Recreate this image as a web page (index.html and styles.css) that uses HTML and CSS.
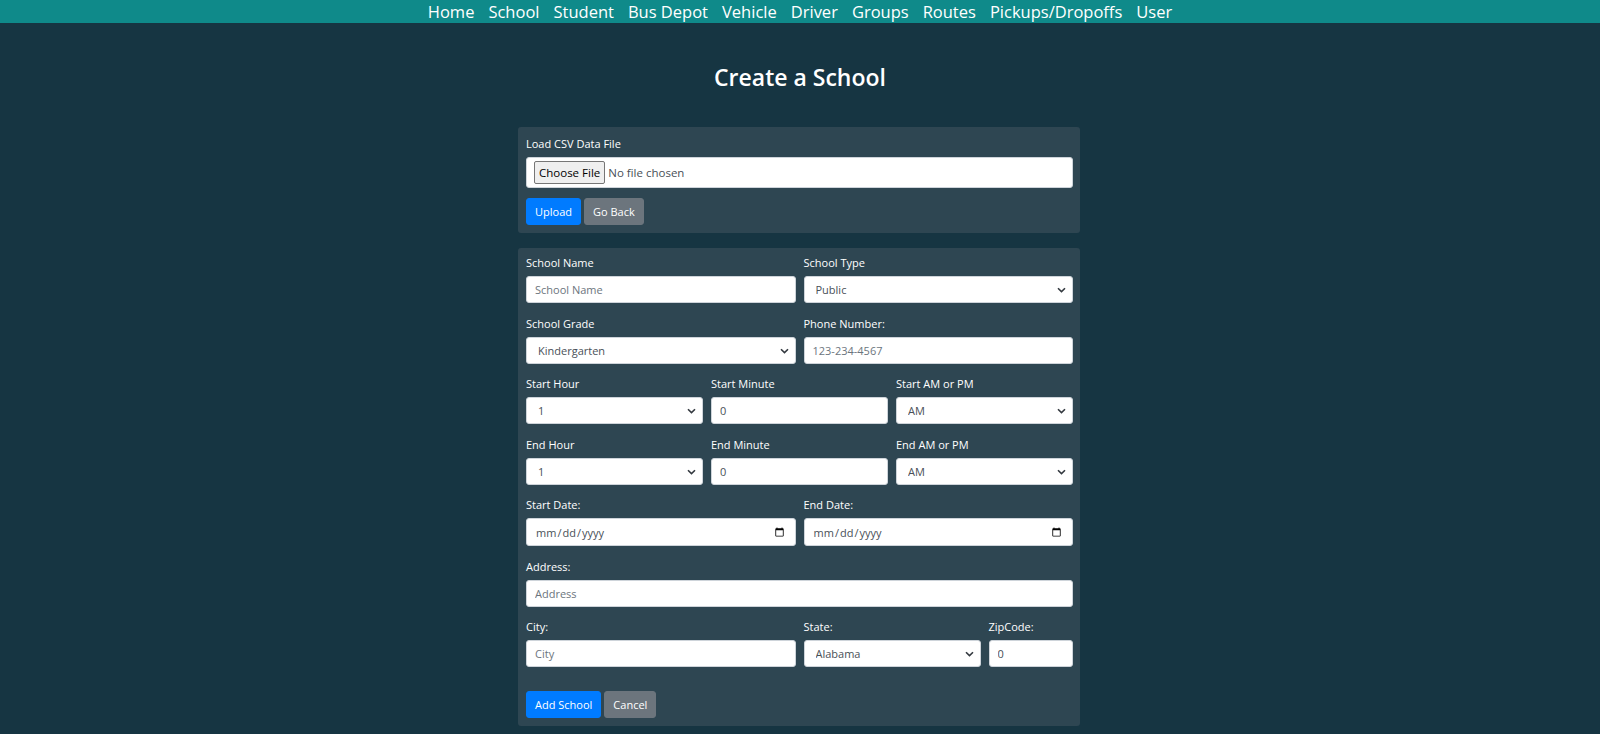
FILE: index.html
```html
<!DOCTYPE html>
<html lang="en">
<head>
<meta charset="utf-8">
<title>Create a School</title>
<link rel="stylesheet" href="styles.css">
</head>
<body>
<nav class="topnav">
  <a href="#">Home</a>
  <a href="#">School</a>
  <a href="#">Student</a>
  <a href="#">Bus Depot</a>
  <a href="#">Vehicle</a>
  <a href="#">Driver</a>
  <a href="#">Groups</a>
  <a href="#">Routes</a>
  <a href="#">Pickups/Dropoffs</a>
  <a href="#">User</a>
</nav>

<h1 class="page-title">Create a School</h1>

<main class="wrap">
  <section class="card upload-card">
    <label class="lbl" for="csv">Load CSV Data File</label>
    <div class="file-box"><input id="csv" class="file-input" type="file"></div>
    <div class="btn-row upload-row">
      <button class="btn btn-primary" type="button">Upload</button>
      <button class="btn btn-secondary" type="button">Go Back</button>
    </div>
  </section>

  <form class="card form-card">
    <div class="grid">
      <div class="field span6">
        <label class="lbl">School Name</label>
        <input class="ctl" type="text" placeholder="School Name">
      </div>
      <div class="field span6">
        <label class="lbl">School Type</label>
        <div class="sel-wrap">
          <select class="ctl sel"><option>Public</option><option>Private</option></select>
          <svg class="chev" width="9" height="6" viewBox="0 0 9 6"><path d="M1 1.2 L4.5 4.6 L8 1.2" fill="none" stroke="#343a40" stroke-width="1.6"/></svg>
        </div>
      </div>

      <div class="field span6">
        <label class="lbl">School Grade</label>
        <div class="sel-wrap">
          <select class="ctl sel"><option>Kindergarten</option></select>
          <svg class="chev" width="9" height="6" viewBox="0 0 9 6"><path d="M1 1.2 L4.5 4.6 L8 1.2" fill="none" stroke="#343a40" stroke-width="1.6"/></svg>
        </div>
      </div>
      <div class="field span6">
        <label class="lbl">Phone Number:</label>
        <input class="ctl" type="text" placeholder="123-234-4567">
      </div>

      <div class="field span4">
        <label class="lbl">Start Hour</label>
        <div class="sel-wrap">
          <select class="ctl sel"><option>1</option></select>
          <svg class="chev" width="9" height="6" viewBox="0 0 9 6"><path d="M1 1.2 L4.5 4.6 L8 1.2" fill="none" stroke="#343a40" stroke-width="1.6"/></svg>
        </div>
      </div>
      <div class="field span4">
        <label class="lbl">Start Minute</label>
        <input class="ctl" type="text" value="0">
      </div>
      <div class="field span4">
        <label class="lbl">Start AM or PM</label>
        <div class="sel-wrap">
          <select class="ctl sel"><option>AM</option><option>PM</option></select>
          <svg class="chev" width="9" height="6" viewBox="0 0 9 6"><path d="M1 1.2 L4.5 4.6 L8 1.2" fill="none" stroke="#343a40" stroke-width="1.6"/></svg>
        </div>
      </div>

      <div class="field span4">
        <label class="lbl">End Hour</label>
        <div class="sel-wrap">
          <select class="ctl sel"><option>1</option></select>
          <svg class="chev" width="9" height="6" viewBox="0 0 9 6"><path d="M1 1.2 L4.5 4.6 L8 1.2" fill="none" stroke="#343a40" stroke-width="1.6"/></svg>
        </div>
      </div>
      <div class="field span4">
        <label class="lbl">End Minute</label>
        <input class="ctl" type="text" value="0">
      </div>
      <div class="field span4">
        <label class="lbl">End AM or PM</label>
        <div class="sel-wrap">
          <select class="ctl sel"><option>AM</option><option>PM</option></select>
          <svg class="chev" width="9" height="6" viewBox="0 0 9 6"><path d="M1 1.2 L4.5 4.6 L8 1.2" fill="none" stroke="#343a40" stroke-width="1.6"/></svg>
        </div>
      </div>

      <div class="field span6">
        <label class="lbl">Start Date:</label>
        <input class="ctl date" type="date">
      </div>
      <div class="field span6">
        <label class="lbl">End Date:</label>
        <input class="ctl date" type="date">
      </div>

      <div class="field span12">
        <label class="lbl">Address:</label>
        <input class="ctl" type="text" placeholder="Address">
      </div>

      <div class="field span6">
        <label class="lbl">City:</label>
        <input class="ctl" type="text" placeholder="City">
      </div>
      <div class="field span4">
        <label class="lbl">State:</label>
        <div class="sel-wrap">
          <select class="ctl sel"><option>Alabama</option></select>
          <svg class="chev" width="9" height="6" viewBox="0 0 9 6"><path d="M1 1.2 L4.5 4.6 L8 1.2" fill="none" stroke="#343a40" stroke-width="1.6"/></svg>
        </div>
      </div>
      <div class="field span2">
        <label class="lbl">ZipCode:</label>
        <input class="ctl" type="text" value="0">
      </div>
    </div>
    <div class="btn-row submit-row">
      <button class="btn btn-primary" type="button">Add School</button>
      <button class="btn btn-secondary" type="button">Cancel</button>
    </div>
  </form>
</main>
</body>
</html>
```

FILE: styles.css
```css
* { box-sizing: border-box; }

html, body { height: 100%; }

body {
  margin: 0;
  background: #163542;
  color: #ffffff;
  font-family: "Open Sans", "Noto Sans", "Liberation Sans", sans-serif;
}

.topnav {
  display: flex;
  justify-content: center;
  align-items: center;
  height: 23px;
  background: #0f8a8a;
}

.topnav a {
  color: #ffffff;
  text-decoration: none;
  font-size: 16.5px;
  line-height: 23px;
  padding: 0 7px;
}

.page-title {
  margin: 40px 0 36px;
  font-size: 23px;
  line-height: 28px;
  font-weight: 600;
  text-align: center;
}

.wrap {
  width: 562px;
  margin: 0 auto;
  position: relative;
  left: -1px;
}

.card {
  background: #2e4652;
  border-radius: 3px;
  padding: 7px 7px 8px 8px;
}

.upload-card {
  padding-top: 8px;
  padding-bottom: 8px;
}

.form-card {
  margin-top: 15px;
  padding-top: 6px;
}

.lbl {
  display: block;
  font-size: 11px;
  line-height: 18px;
  margin-bottom: 4px;
  color: #ffffff;
}

.file-box {
  height: 31px;
  background: #ffffff;
  border: 1px solid #ced4da;
  border-radius: 3px;
  padding: 2px 7px;
  display: flex;
  align-items: center;
}

.file-input {
  font-family: inherit;
  font-size: 11.5px;
  color: #495057;
}

.file-input::file-selector-button {
  font-family: inherit;
  font-size: 11.5px;
  height: 23px;
  padding: 0 4px;
  margin-right: 3px;
  background: #efefef;
  border: 1px solid #767676;
  border-radius: 2px;
  color: #000;
}

.btn-row {
  display: flex;
  gap: 3px;
  margin-top: 12px;
}

.upload-row { margin-top: 10px; }

.btn {
  font-family: inherit;
  font-size: 11px;
  line-height: 17px;
  height: 27px;
  padding: 4px 8px;
  border: 1px solid transparent;
  border-radius: 3px;
  color: #ffffff;
  cursor: pointer;
}

.btn-primary { background: #007bff; border-color: #007bff; }
.btn-secondary { background: #6c757d; border-color: #6c757d; }

.grid {
  display: grid;
  grid-template-columns: repeat(12, 1fr);
  column-gap: 8px;
}

.field { margin-bottom: 11.5px; min-width: 0; }
.span2 { grid-column: span 2; }
.span4 { grid-column: span 4; }
.span6 { grid-column: span 6; }
.span12 { grid-column: span 12; }

.ctl {
  display: block;
  width: 100%;
  height: 27px;
  padding: 2px 8px;
  font-family: inherit;
  font-size: 11px;
  color: #495057;
  background: #ffffff;
  border: 1px solid #ced4da;
  border-radius: 3px;
  outline: none;
}

.ctl::placeholder { color: #6c757d; }

.sel-wrap { position: relative; }

.sel {
  -webkit-appearance: none;
  appearance: none;
  padding-left: 11px;
  padding-right: 24px;
}

.chev {
  position: absolute;
  right: 7px;
  top: 11px;
  pointer-events: none;
}

.date { height: 28px; }

.submit-row { margin-top: 12px; }
```
